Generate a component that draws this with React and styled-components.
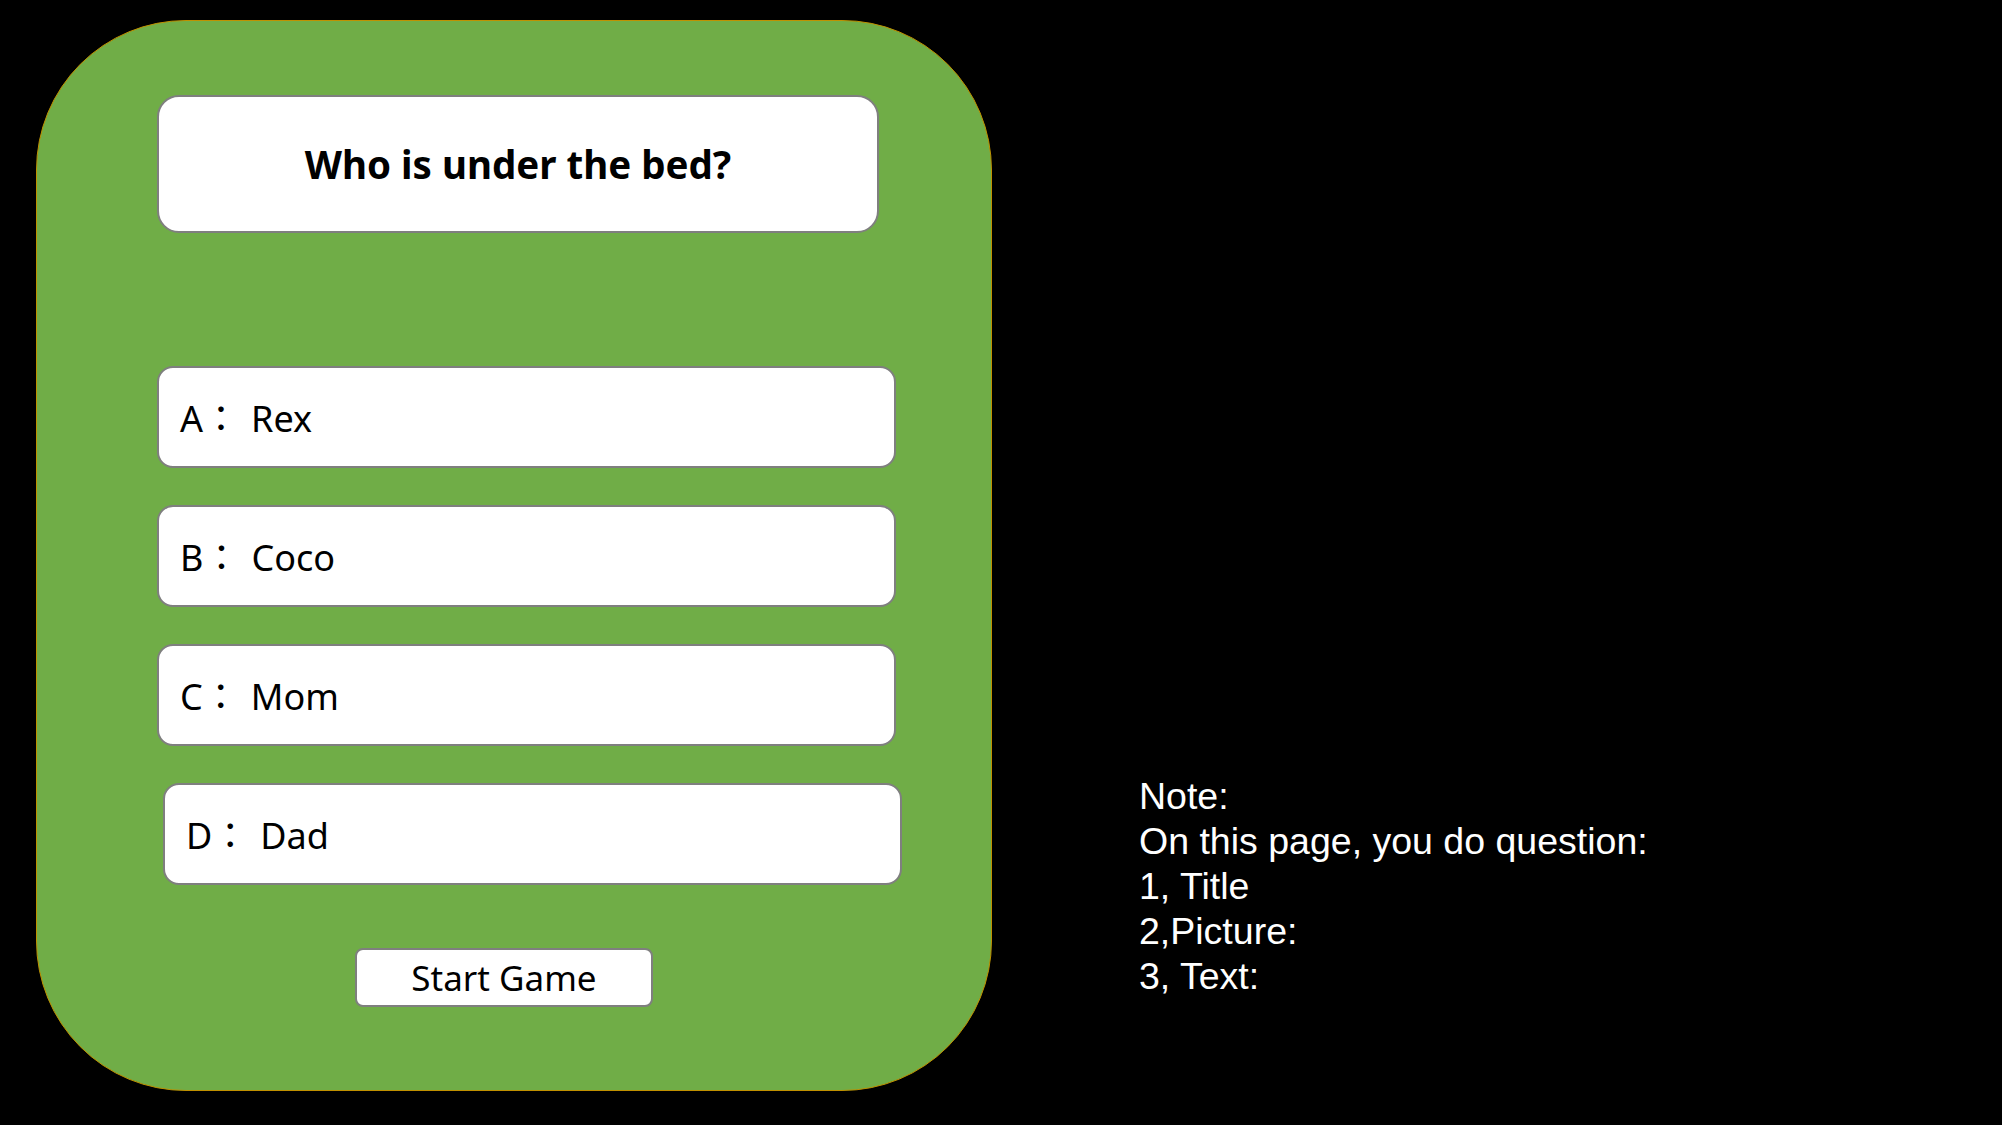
import React from 'react'
import styled, { createGlobalStyle } from 'styled-components'

const options = [
    { id: 'A', name: 'Rex' },
    { id: 'B', name: 'Coco' },
    { id: 'C', name: 'Mom' },
    { id: 'D', name: 'Dad', shift: 6 },
]

const notes = [
    'Note:',
    'On this page, you do question:',
    '1, Title',
    '2,Picture:',
    '3, Text:',
]

const App = () => {
    return (
        <>
            <GlobalStyle />
            <Page>
                <Panel>
                    <TitleBox>Who is under the bed?</TitleBox>
                    <OptionList>
                        {
                            options.map((opt) => (
                                <Option key={opt.id} $shift={opt.shift}>
                                    <OptionLabel>
                                        {opt.id}：<OptionName>{opt.name}</OptionName>
                                    </OptionLabel>
                                </Option>
                            ))
                        }
                    </OptionList>
                    <StartButton>Start Game</StartButton>
                </Panel>
                <Note>
                    {
                        notes.map((line) => (
                            <p key={line}>{line}</p>
                        ))
                    }
                </Note>
            </Page>
        </>
    )
}

export default App


const GlobalStyle = createGlobalStyle`
  html, body {
    margin: 0;
    padding: 0;
    background: #000;
  }
  * {
    box-sizing: border-box;
  }
`

const Page = styled.div`
  display: flex;
  align-items: flex-start;
  width: 2002px;
  height: 1125px;
  padding: 20px 0 0 36px;
  background: #000;
`

const Panel = styled.div`
  display: flex;
  flex-direction: column;
  align-items: flex-start;
  width: 956px;
  height: 1071px;
  padding: 74px 0 0 120px;
  background: #70ad47;
  border: 1px solid #bf9000;
  border-radius: 150px;
`

const TitleBox = styled.div`
  display: flex;
  align-items: center;
  justify-content: center;
  width: 722px;
  height: 138px;
  background: #fff;
  border: 2px solid #7f7f7f;
  border-radius: 22px;
  font-family: "Noto Sans", "Liberation Sans", sans-serif;
  font-weight: 700;
  font-size: 38.5px;
  color: #000;
`

const OptionList = styled.ul`
  display: flex;
  flex-direction: column;
  gap: 37px;
  margin: 133px 0 0;
  padding: 0;
  list-style: none;
`

const Option = styled.li`
  display: flex;
  align-items: center;
  width: 739px;
  height: 102px;
  margin-left: ${(p) => p.$shift || 0}px;
  padding: 4px 0 0 21px;
  background: #fff;
  border: 2px solid #7f7f7f;
  border-radius: 16px;
  font-family: "Noto Sans", "Noto Sans CJK JP", sans-serif;
  font-size: 36px;
  font-weight: 400;
  color: #000;
`

const OptionLabel = styled.span`
  line-height: 1.2;
  white-space: nowrap;
`

const OptionName = styled.span`
  margin-left: 12px;
`

const StartButton = styled.button`
  width: 298px;
  height: 59px;
  margin: 63px 0 0 198px;
  padding: 0;
  background: #fff;
  border: 2px solid #7f7f7f;
  border-radius: 8px;
  font-family: "Noto Sans", sans-serif;
  font-size: 35px;
  line-height: 1;
  color: #000;
`

const Note = styled.div`
  margin: 754px 0 0 147px;
  font-family: "Liberation Sans", Arial, sans-serif;
  font-size: 37.5px;
  line-height: 45px;
  color: #fff;
  p {
    margin: 0;
  }
`
